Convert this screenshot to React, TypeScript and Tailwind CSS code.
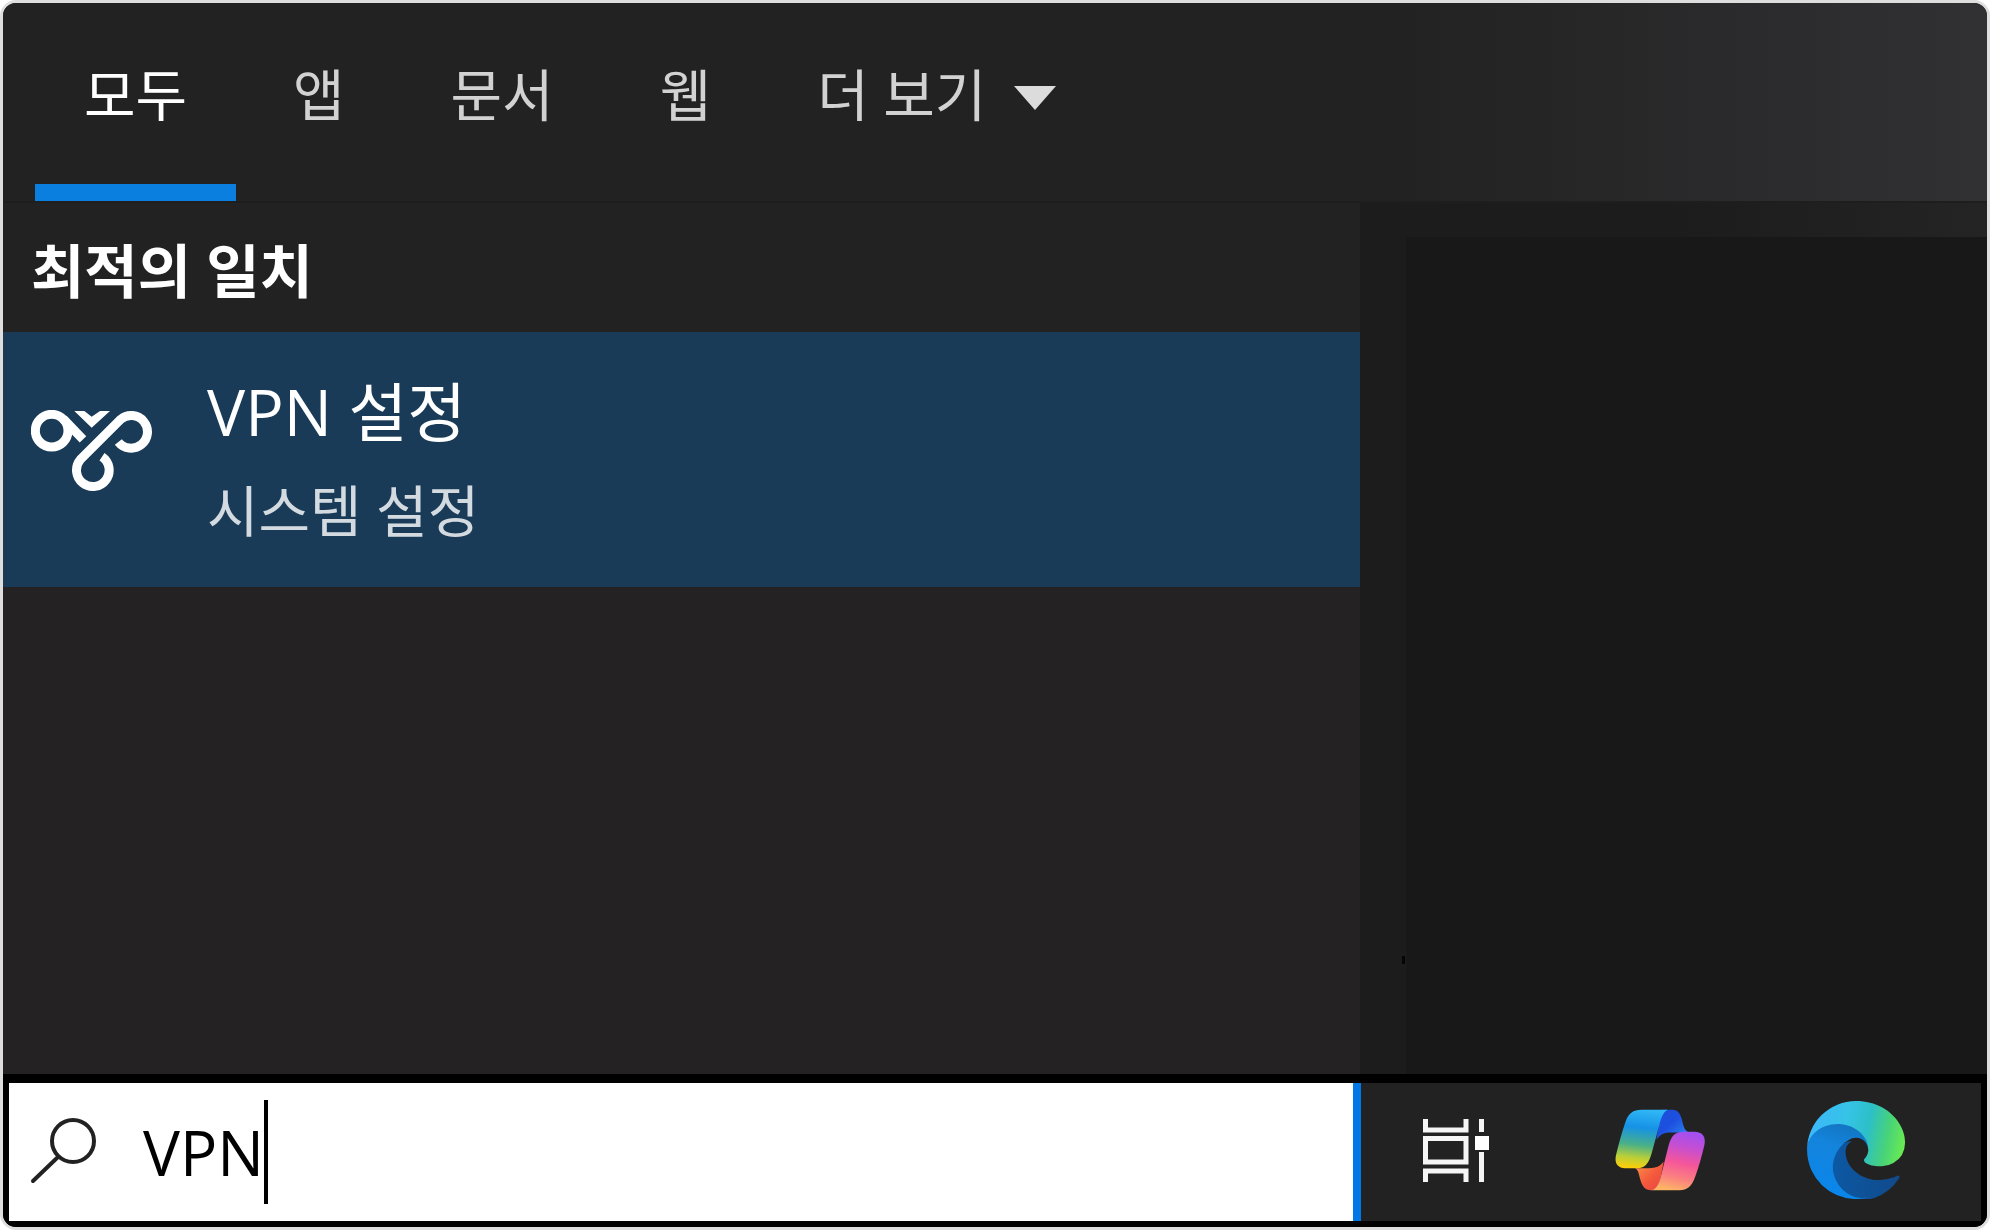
import { useState } from 'react'
import { clsx } from 'clsx'

const tabs = ['모두', '앱', '문서', '웹']

function VpnIcon() {
  return (
    <svg viewBox="0 0 366 246" className="w-[122px] h-[82px] shrink-0" fill="none" stroke="white" strokeWidth="27" aria-hidden="true">
      <circle cx="62" cy="62" r="49" />
      <path d="M97 27L156 88" />
      <path d="M262 96A49 49 0 1 0 269 28L148 149A49 49 0 1 0 213 140" />
      <path d="M130 3H160L182 20L207 3H237L182 53Z" fill="white" stroke="none" />
    </svg>
  )
}

function SearchIcon() {
  return (
    <svg viewBox="0 0 68 68" className="w-[68px] h-[68px] shrink-0" fill="none" stroke="#222" strokeWidth="4" strokeLinecap="round" aria-hidden="true">
      <circle cx="44" cy="23" r="21" />
      <path d="M29 39L4 63" />
    </svg>
  )
}

function TaskViewIcon() {
  return (
    <svg viewBox="0 0 68 63" className="w-[68px] h-[63px]" fill="none" stroke="#f5f5f5" strokeWidth="5" aria-hidden="true">
      <path d="M3.500 0V11H44V0" />
      <path d="M3.500 19.500H44V43H3.500Z" />
      <path d="M3.500 63V52H44V63" />
      <path d="M59.500 0V13M59.500 33V63" />
      <path d="M53 17H67V31H53Z" fill="#fff" stroke="none" />
    </svg>
  )
}

function CopilotIcon() {
  return (
    <svg viewBox="0 0 270 245" className="w-[90px] h-[82px]" aria-hidden="true">
      <defs>
        <linearGradient id="cp-left" x1="0.500" y1="0" x2="0.400" y2="1">
          <stop offset="0" stopColor="#2fb6f5" />
          <stop offset="0.300" stopColor="#1692e6" />
          <stop offset="0.600" stopColor="#49b088" />
          <stop offset="0.820" stopColor="#b8cf3a" />
          <stop offset="1" stopColor="#fbcf0a" />
        </linearGradient>
        <linearGradient id="cp-back" x1="0" y1="0" x2="1" y2="1">
          <stop offset="0" stopColor="#1c50d8" />
          <stop offset="0.450" stopColor="#1d4fe0" />
          <stop offset="1" stopColor="#2f93f2" />
        </linearGradient>
        <linearGradient id="cp-right" x1="0.600" y1="0" x2="0.400" y2="1">
          <stop offset="0" stopColor="#a44ff0" />
          <stop offset="0.250" stopColor="#c64fd0" />
          <stop offset="0.520" stopColor="#f5569a" />
          <stop offset="0.780" stopColor="#fb8080" />
          <stop offset="1" stopColor="#fdb465" />
        </linearGradient>
        <linearGradient id="cp-red" x1="0" y1="0" x2="1" y2="1">
          <stop offset="0" stopColor="#f9964a" />
          <stop offset="0.550" stopColor="#f4593c" />
          <stop offset="1" stopColor="#e94446" />
        </linearGradient>
      </defs>
      <path d="M140 2H172C190 2 197 16 202 36C206 54 210 66 224 70H165C145 70 136 76 124 92Z" fill="url(#cp-back)" />
      <path d="M60 177H100C125 177 134 172 146 158L136 210C130 232 122 243 108 243C90 243 82 233 76 212C71 194 70 181 60 177Z" fill="url(#cp-red)" />
      <path d="M80 2H158C146 8 139 24 134 44L110 132C102 160 92 177 66 177H30C6 177 -2 160 3 138C10 108 20 72 30 42C40 12 54 2 80 2Z" fill="url(#cp-left)" />
      <path d="M206 68H238C264 68 273 84 268 108C260 142 252 172 240 204C230 232 216 243 194 243H108C122 242 130 228 136 208L160 112C168 84 176 68 206 68Z" fill="url(#cp-right)" />
    </svg>
  )
}

function EdgeIcon() {
  return (
    <svg viewBox="0 0 256 256" className="w-[98px] h-[98px]" aria-hidden="true">
      <defs>
        <linearGradient id="edge-dark" x1="63" y1="177" x2="241" y2="177" gradientUnits="userSpaceOnUse">
          <stop offset="0" stopColor="#0c59a4" />
          <stop offset="1" stopColor="#114a8b" />
        </linearGradient>
        <linearGradient id="edge-mid" x1="110" y1="50" x2="50" y2="230" gradientUnits="userSpaceOnUse">
          <stop offset="0" stopColor="#1273bd" />
          <stop offset="0.400" stopColor="#1484dc" />
          <stop offset="1" stopColor="#0a86ea" />
        </linearGradient>
        <linearGradient id="edge-top" x1="10" y1="70" x2="256" y2="120" gradientUnits="userSpaceOnUse">
          <stop offset="0" stopColor="#3cb8fa" />
          <stop offset="0.350" stopColor="#36c4e6" />
          <stop offset="0.580" stopColor="#2cbfc8" />
          <stop offset="0.800" stopColor="#48d378" />
          <stop offset="1" stopColor="#6cec50" />
        </linearGradient>
      </defs>
      <path d="M235.680 195.430a93.730 93.730 0 0 1-10.540 4.710 101.870 101.870 0 0 1-35.900 6.460c-47.320 0-88.540-32.550-88.540-74.320a31.480 31.480 0 0 1 16.430-27.310c-42.800 1.800-53.800 46.400-53.800 72.530 0 73.880 68.090 81.370 82.760 81.370 7.910 0 19.840-2.300 27-4.560l1.310-.44a128.340 128.340 0 0 0 66.600-52.800 4 4 0 0 0-5.320-5.640Z" fill="url(#edge-dark)" />
      <path d="M105.730 241.420a79.200 79.200 0 0 1-22.740-21.340 80.720 80.720 0 0 1 29.530-120c3.120-1.470 8.450-4.130 15.540-4a32.350 32.350 0 0 1 25.690 13 31.880 31.880 0 0 1 6.360 18.660c0-.21 24.460-79.600-80-79.600-43.900 0-80 41.660-80 78.210a130.150 130.150 0 0 0 12.110 56 128 128 0 0 0 156.380 67.110 75.550 75.550 0 0 1-62.780-8Z" fill="url(#edge-mid)" />
      <path d="M152.330 148.860c-.81 1.050-3.300 2.500-3.300 5.660 0 2.610 1.700 5.120 4.720 7.230 14.380 10 41.490 8.680 41.560 8.680a59.560 59.560 0 0 0 30.270-8.350 61.380 61.380 0 0 0 30.430-52.880c.26-22.410-8-37.310-11.340-43.910C223.480 23.840 177.720 0 128 0A128 128 0 0 0 0 126.200c.48-36.540 36.800-66.050 80-66.050 3.500 0 23.460.34 42 10.070 16.340 8.580 24.900 18.940 30.850 29.210 6.180 10.670 7.280 24.150 7.280 29.520 0 5.370-2.740 13.330-7.800 19.910Z" fill="url(#edge-top)" />
    </svg>
  )
}

export default function App() {
  const [activeTab, setActiveTab] = useState('모두')
  const [query, setQuery] = useState('VPN')

  return (
    <div className="min-h-screen bg-white font-['Open_Sans','Noto_Sans_CJK_KR',sans-serif]">
      <div className="min-h-screen flex flex-col overflow-hidden rounded-2xl border-[3px] border-[#dedede] bg-[#222222] text-white">
        {/* Filter tabs */}
        <header
          role="tablist"
          className="flex gap-2 h-[200px] pl-8 border-b-2 border-[#1e1e1e] bg-gradient-to-r from-[#222222] from-70% to-[#313033] text-[56px] leading-[80px]"
        >
          {tabs.map((tab) => (
            <button
              key={tab}
              role="tab"
              aria-selected={activeTab === tab}
              onClick={() => setActiveTab(tab)}
              className={clsx(
                'px-[49px] pt-[50px] pb-[50px] border-b-[17px] whitespace-nowrap',
                activeTab === tab ? 'border-[#0a7fe0] text-white' : 'border-transparent text-[#d2d2d2]'
              )}
            >
              {tab}
            </button>
          ))}
          <button className="flex items-center gap-7 px-[49px] pt-[50px] pb-[67px] whitespace-nowrap text-[#d2d2d2]">
            더 보기
            <svg viewBox="0 0 42 24" className="w-[42px] h-6 mt-2" fill="#dcdcdc" aria-hidden="true">
              <path d="M0 0H42L21 24Z" />
            </svg>
          </button>
        </header>

        <main className="flex-1 grid grid-cols-[1357fr_627fr]">
          <section className="bg-[#242223]">
            <h2 className="bg-[#222222] h-[129px] pl-7 pt-7 text-[58px] leading-[80px] font-bold">최적의 일치</h2>
            <a href="#vpn" className="flex items-start h-[255px] bg-[#193b57] pl-7">
              <div className="pt-[78px]">
                <VpnIcon />
              </div>
              <div className="pl-[54px] pt-[30px]">
                <div className="text-[64px] leading-[100px]">VPN 설정</div>
                <div className="text-[56px] leading-[96px] text-[#d3dae0]">시스템 설정</div>
              </div>
            </a>
          </section>
          <aside className="relative flex bg-gradient-to-r from-[#1c1c1c] from-50% to-[#242425] pt-[34px] pl-[46px]">
            <span className="absolute left-[42px] bottom-[110px] w-[3px] h-2 bg-[#050505]" />
            <div className="flex-1 bg-[#181818]" />
          </aside>
        </main>

        {/* Taskbar */}
        <footer className="grid grid-cols-[1352fr_620fr] h-[153px] border-[6px] border-t-[9px] border-black">
          <label className="flex items-center bg-white border-r-8 border-[#0078e7] pl-5 text-black cursor-text">
            <SearchIcon />
            <input
              aria-label="검색"
              value={query}
              onChange={(e) => setQuery(e.target.value)}
              className="field-sizing-content ml-[46px] text-[62px] leading-[104px] outline-none caret-transparent"
            />
            <span className="w-1 h-[104px] bg-black" />
          </label>
          <nav className="flex items-center pl-[61px] pb-1">
            <button aria-label="작업 보기">
              <TaskViewIcon />
            </button>
            <button aria-label="Copilot" className="ml-[125px]">
              <CopilotIcon />
            </button>
            <button aria-label="Microsoft Edge" className="ml-[102px]">
              <EdgeIcon />
            </button>
          </nav>
        </footer>
      </div>
    </div>
  )
}
